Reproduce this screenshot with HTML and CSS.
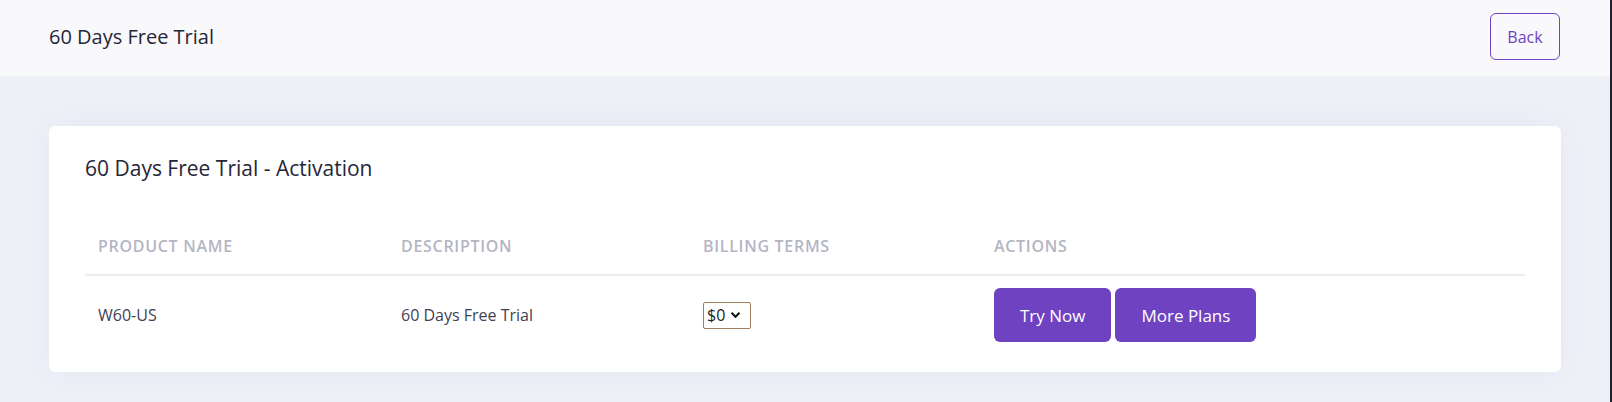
FILE: index.html
```html
<!DOCTYPE html>
<html lang="en">
<head>
<meta charset="utf-8">
<title>60 Days Free Trial</title>
<link rel="stylesheet" href="styles.css">
</head>
<body>
<div class="page">
  <header class="topbar">
    <h1 class="topbar-title">60 Days Free Trial</h1>
    <button class="btn-outline" type="button">Back</button>
  </header>
  <main class="content">
    <section class="card">
      <h2 class="card-title">60 Days Free Trial - Activation</h2>
      <div class="table">
        <div class="row head">
          <div class="cell">Product Name</div>
          <div class="cell">Description</div>
          <div class="cell">Billing Terms</div>
          <div class="cell">Actions</div>
        </div>
        <div class="row body">
          <div class="cell">W60-US</div>
          <div class="cell">60 Days Free Trial</div>
          <div class="cell">
            <div class="select">
              <span>$0</span>
              <svg width="11" height="8" viewBox="0 0 11 8"><path d="M1.5 1.8 L5.5 5.8 L9.5 1.8" fill="none" stroke="#111" stroke-width="2"/></svg>
            </div>
          </div>
          <div class="cell actions">
            <button class="btn-primary" type="button">Try Now</button>
            <button class="btn-primary" type="button">More Plans</button>
          </div>
        </div>
      </div>
    </section>
  </main>
</div>
</body>
</html>
```

FILE: styles.css
```css
* { box-sizing: border-box; }
html, body { margin: 0; padding: 0; }
body {
  font-family: "Open Sans", "Noto Sans", sans-serif;
  background: #eef0f8;
  color: #3f4254;
}
.page {
  min-height: 100vh;
  border-right: 2px solid #24212f;
}
.topbar {
  height: 76px;
  background: #f9f9fc;
  display: flex;
  align-items: center;
  justify-content: space-between;
  padding: 0 50px 3px 49px;
}
.topbar-title {
  margin: 0;
  font-size: 20px;
  font-weight: 400;
  color: #262637;
}
.btn-outline {
  width: 70px;
  height: 47px;
  border: 1px solid #6f42c1;
  border-radius: 6px;
  background: transparent;
  color: #6f42c1;
  font-family: inherit;
  font-size: 16px;
  padding: 0;
}
.content {
  padding: 50px 49px 30px 49px;
}
.card {
  background: #fff;
  border-radius: 6px;
  box-shadow: 0 0 30px rgba(82, 63, 105, 0.05);
  padding: 30px 36px 16px 36px;
}
.card-title {
  margin: 0 0 38px 0;
  font-size: 21px;
  line-height: 24px;
  font-weight: 400;
  color: #262637;
}
.table { display: flex; flex-direction: column; }
.row {
  display: grid;
  grid-template-columns: 303px 302px 291px 1fr;
  align-items: center;
}
.row.head {
  border-bottom: 2px solid #ebedf3;
}
.row.head .cell {
  padding: 19px 13px;
  font-size: 16px;
  line-height: 18px;
  font-weight: 600;
  letter-spacing: 0.7px;
  text-transform: uppercase;
  color: #b5b5c3;
}
.row.body .cell {
  padding: 12px 13px 14px 13px;
  font-size: 16px;
  color: #3f4254;
}
.select {
  display: inline-flex;
  align-items: center;
  gap: 5px;
  width: 48px;
  height: 27px;
  border: 1px solid #9f7f5f;
  border-radius: 2px;
  padding: 0 0 0 3px;
  font-size: 16px;
  color: #222;
}
.actions { display: flex; gap: 4px; }
.btn-primary {
  height: 54px;
  padding: 0 26px;
  border: none;
  border-radius: 6px;
  background: #6f42c1;
  color: #fff;
  font-family: inherit;
  font-size: 17px;
}
```
